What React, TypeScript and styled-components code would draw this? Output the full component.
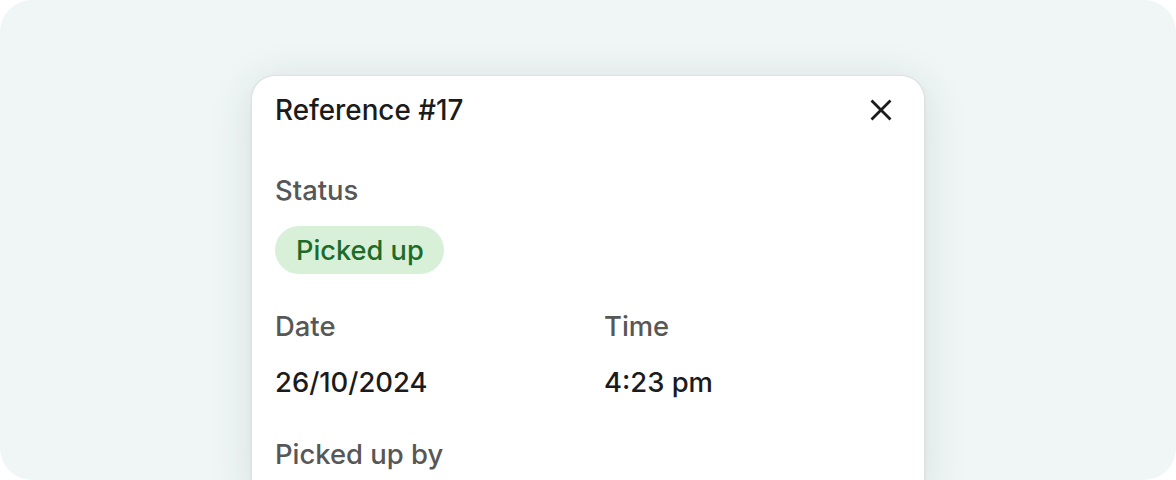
import React from "react";
import styled, { createGlobalStyle } from "styled-components";

const Global = createGlobalStyle`
  html, body { margin: 0; padding: 0; background: #ffffff; }
  body { font-family: Inter, "Noto Sans", sans-serif; -webkit-font-smoothing: antialiased; }
`;

const Stage = styled.div`
  width: 1176px;
  height: 480px;
  border-radius: 32px;
  overflow: hidden;
  background: #f0f6f6;
  display: flex;
  justify-content: center;
  padding-top: 75px;
  box-sizing: border-box;
`;

const Card = styled.section`
  width: 674px;
  box-sizing: border-box;
  background: #ffffff;
  border: 1px solid #dde1e1;
  border-bottom: none;
  border-radius: 24px 24px 0 0;
  box-shadow: 0 6px 44px rgba(30, 50, 50, 0.12), 0 1px 3px rgba(0, 0, 0, 0.05);
  padding: 20px 23px 0;
  display: flex;
  flex-direction: column;
  align-self: flex-start;
  min-height: 420px;
`;

const Header = styled.header`
  display: flex;
  align-items: center;
  justify-content: space-between;
  height: 28px;
`;

const Title = styled.h2`
  margin: 0;
  font-size: 27.8px;
  line-height: 28px;
  font-weight: 540;
  color: #1b1b1b;
`;

const CloseButton = styled.button`
  border: none;
  background: none;
  padding: 0;
  margin-right: 8px;
  width: 24px;
  height: 24px;
  display: flex;
  align-items: center;
  justify-content: center;
  color: #1b1b1b;
  cursor: pointer;
`;

const Field = styled.div<{ $top: number }>`
  display: flex;
  flex-direction: column;
  margin-top: ${(p) => p.$top}px;
`;

const Label = styled.div`
  font-size: 27.4px;
  line-height: 28px;
  font-weight: 540;
  color: #575757;
`;

const Value = styled.div`
  margin-top: 28px;
  font-size: 27.4px;
  line-height: 28px;
  font-weight: 540;
  color: #1b1b1b;
`;

const Badge = styled.span`
  margin-top: 22px;
  align-self: flex-start;
  height: 48px;
  padding: 0 20px 0 21px;
  border-radius: 24px;
  background: #d8f0d8;
  color: #1c6b2a;
  font-size: 27.2px;
  font-weight: 540;
  display: inline-flex;
  align-items: center;
`;

const Columns = styled.div`
  display: grid;
  grid-template-columns: 1fr 1fr;
  column-gap: 32px;
  margin-top: 38px;
`;

export default function App() {
  return (
    <>
      <Global />
      <Stage>
        <Card>
          <Header>
            <Title>Reference #17</Title>
            <CloseButton aria-label="Close">
              <svg width="24" height="24" viewBox="0 0 24 24" fill="none">
                <path d="M3.5 3.5L20.5 20.5M20.5 3.5L3.5 20.5" stroke="currentColor" strokeWidth="2.8" strokeLinecap="square" />
              </svg>
            </CloseButton>
          </Header>
          <Field $top={52}>
            <Label>Status</Label>
            <Badge>Picked up</Badge>
          </Field>
          <Columns>
            <Field $top={0}>
              <Label>Date</Label>
              <Value>26/10/2024</Value>
            </Field>
            <Field $top={0}>
              <Label>Time</Label>
              <Value>4:23 pm</Value>
            </Field>
          </Columns>
          <Field $top={44}>
            <Label>Picked up by</Label>
          </Field>
        </Card>
      </Stage>
    </>
  );
}
